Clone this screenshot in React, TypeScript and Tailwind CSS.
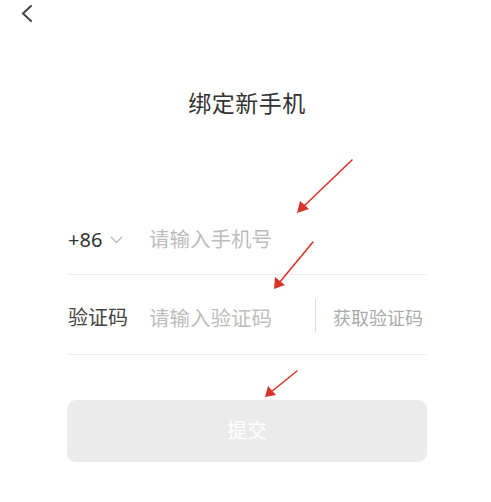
import { useState } from "react";

// 绑定新手机 page
export default function App() {
  const [phone, setPhone] = useState("");
  const [code, setCode] = useState("");
  const canSubmit = phone.trim() !== "" && code.trim() !== "";

  return (
    <div
      className="relative w-[491px] h-[502px] bg-white overflow-hidden"
      style={{ fontFamily: '"Noto Sans", "Noto Sans CJK SC", sans-serif' }}
    >
      {/* header */}
      <div className="h-[24px] flex items-center pl-[19px] pt-[2px]">
        <button className="text-[#444]" aria-label="back">
          <svg width="16" height="18" viewBox="0 0 16 18" fill="none">
            <path d="M12 2 L4 9.5 L12 17" stroke="currentColor" strokeWidth="2" strokeLinecap="round" strokeLinejoin="round" />
          </svg>
        </button>
      </div>

      <div className="ml-[67px] w-[360px]">
        <h1 className="mt-[64px] text-center text-[23px] leading-[30px] text-[#333] tracking-[0.5px]">绑定新手机</h1>

        {/* phone row */}
        <div className="mt-[87px] h-[70px] flex items-center border-b border-[#efefef]">
          <div className="w-[82px] flex items-center text-[20px] text-[#333] pl-[1px]">
            <span>+86</span>
            <svg className="ml-[8px] mt-[1px]" width="13" height="8" viewBox="0 0 13 8" fill="none">
              <path d="M1 1 L6.5 6.5 L12 1" stroke="#b5b5b5" strokeWidth="1.2" />
            </svg>
          </div>
          <input
            value={phone}
            onChange={(e) => setPhone(e.target.value)}
            placeholder="请输入手机号"
            className="flex-1 min-w-0 bg-transparent outline-none text-[20.5px] text-[#333] placeholder:text-[#bdbdbd]"
          />
        </div>

        {/* code row */}
        <div className="h-[80px] flex items-center pt-[7px] border-b border-[#efefef]">
          <div className="w-[82px] text-[20px] text-[#444] pl-[1px]">验证码</div>
          <input
            value={code}
            onChange={(e) => setCode(e.target.value)}
            placeholder="请输入验证码"
            className="w-[166px] min-w-0 bg-transparent outline-none text-[20.5px] text-[#333] placeholder:text-[#bdbdbd]"
          />
          <div className="w-px h-[33px] bg-[#dedede] mt-[-6px]" />
          <button className="ml-[17px] text-[18px] text-[#ababab]">获取验证码</button>
        </div>

        <button
          disabled={!canSubmit}
          className={`mt-[45px] w-[360px] h-[62px] rounded-[9px] text-[20px] text-white ${canSubmit ? "bg-[#e94b3c]" : "bg-[#ebebeb]"}`}
        >
          提交
        </button>
      </div>

      {/* red annotation arrows */}
      <svg className="absolute inset-0 pointer-events-none" width="491" height="502" viewBox="0 0 491 502">
        <g fill="#d8352a" stroke="#d8352a" strokeLinecap="round">
          <line x1="352" y1="160" x2="303" y2="207" strokeWidth="1.6" />
          <polygon points="297,213 300,201 309,209" stroke="none" />
          <line x1="313" y1="242" x2="279" y2="283" strokeWidth="1.6" />
          <polygon points="274,289 275,277 285,285" stroke="none" />
          <line x1="297" y1="371" x2="271" y2="392" strokeWidth="1.6" />
          <polygon points="265,397 268,386 276,395" stroke="none" />
        </g>
      </svg>
    </div>
  );
}
